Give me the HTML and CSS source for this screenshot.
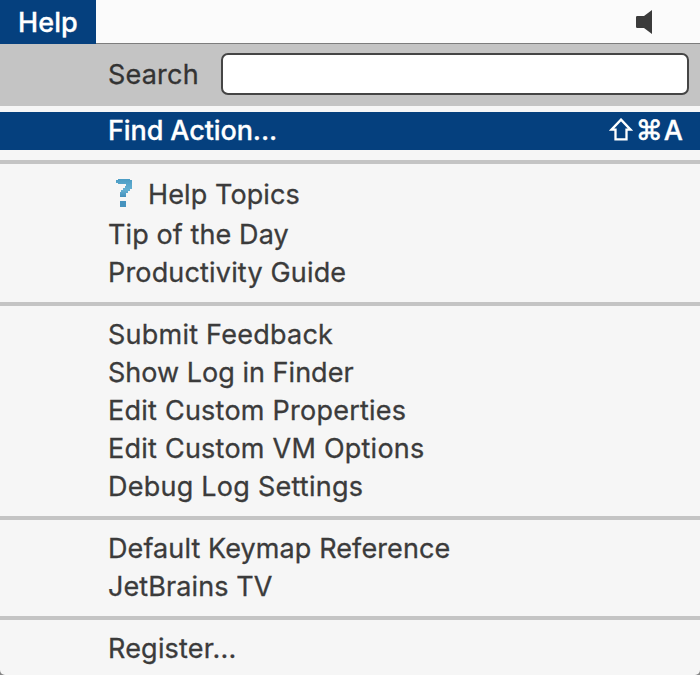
FILE: index.html
```
<!DOCTYPE html>
<html lang="en">
<head>
<meta charset="utf-8">
<title>Help</title>
<link rel="stylesheet" href="styles.css">
</head>
<body>
<header class="menubar">
  <div class="menu-title">Help</div>
  <svg class="speaker" width="17" height="24" viewBox="0 0 17 24"><path d="M0 7.200Q0 6 1.200 6H8L16 0V24L8 18H1.200Q0 18 0 16.800Z" fill="#3b3b3b"/></svg>
</header>
<main class="menu">
  <label class="search"><span class="search-label">Search</span><input class="search-field" type="text"></label>
  <ul class="group first">
    <li class="item selected"><span class="t-find">Find Action...</span><span class="keys"><svg class="shift" width="24" height="24" viewBox="0 0 24 24"><path d="M12 1.600L21.500 11.600H17.500V21.300H6.500V11.600H2.500Z" fill="none" stroke="#fff" stroke-width="2.300" stroke-linejoin="miter"/></svg><span class="cmd">⌘</span><span class="letter">A</span></span></li>
  </ul>
  <ul class="group">
    <li class="item with-icon">
      <svg class="help-icon" width="18" height="30" viewBox="0 0 18 30"><defs><linearGradient id="g" x1="0" y1="0" x2="0" y2="1"><stop offset="0" stop-color="#4b9cc4"/><stop offset=".6" stop-color="#65b0d2"/><stop offset="1" stop-color="#438fbb"/></linearGradient></defs><path fill="url(#g)" d="M1 1H3V0H15V1H17V10H15V12H13V14H11V18H5V13H6V11H8V9H10V7H11V5H3V4H1Z"/><path fill="#4693be" d="M5 22H11V28H5Z"/></svg>
      <span class="t-help">Help Topics</span>
    </li>
    <li class="item"><span class="t-tip">Tip of the Day</span></li>
    <li class="item"><span class="t-prod">Productivity Guide</span></li>
  </ul>
  <ul class="group">
    <li class="item"><span class="t-submit">Submit Feedback</span></li>
    <li class="item"><span class="t-show">Show Log in Finder</span></li>
    <li class="item"><span class="t-props">Edit Custom Properties</span></li>
    <li class="item"><span class="t-vm">Edit Custom VM Options</span></li>
    <li class="item"><span class="t-debug">Debug Log Settings</span></li>
  </ul>
  <ul class="group">
    <li class="item"><span class="t-keymap">Default Keymap Reference</span></li>
    <li class="item"><span class="t-tv">JetBrains TV</span></li>
  </ul>
  <ul class="group">
    <li class="item"><span class="t-reg">Register...</span></li>
  </ul>
</main>
</body>
</html>
```
FILE: styles.css
```
* { box-sizing: border-box; }
body {
  margin: 0;
  height: 675px;
  overflow: hidden;
  background: #858585;
  color: #3b3b3b;
  font: 400 27px/38px Inter, "Liberation Sans", sans-serif;
  letter-spacing: 0.1px;
  -webkit-text-stroke: 0.3px currentColor;
}
.menubar {
  display: flex;
  justify-content: space-between;
  height: 44px;
  background: linear-gradient(#fbfbfb 43px, #7d7d7d 43px);
}
.menu-title {
  width: 96px;
  height: 44px;
  padding: 4px 0 0 18px;
  background: #05407e;
  color: #fff;
  font-weight: 500;
}
.speaker { margin: 10px 47px 0 0; }
.menu {
  height: 631px;
  background: #f6f6f6;
  border-radius: 0 0 5px 5px;
}
.search {
  display: flex;
  align-items: center;
  height: 62px;
  padding: 0 11px 2px 108px;
  background: #c4c4c4;
  color: #333;
  letter-spacing: 0.2px;
}
.search-label {
  width: 113px;
  padding-top: 1px;
}
.search-field {
  flex: 1;
  min-width: 0;
  height: 42px;
  border: 2px solid #454545;
  border-radius: 7px;
  background: #fff;
}
.group {
  margin: 0;
  padding: 10px 0;
  list-style: none;
  border-top: 4px solid #c4c4c4;
}
.group.first { border: 0; padding-top: 6px; }
.item {
  display: flex;
  align-items: center;
  height: 38px;
  padding: 0 17px 0 108px;
  white-space: nowrap;
}
.selected {
  justify-content: space-between;
  background: #05407e;
  color: #fff;
  font-weight: 500;
  letter-spacing: 0;
}
.with-icon { height: 42px; padding: 0 0 2px 115px; }
.help-icon { margin-right: 15px; }
.t-help { padding-top: 2px; }
.keys { display: flex; align-items: center; }
.shift { margin: 0 3px 2px 0; }
.cmd {
  font: 27px/38px "DejaVu Sans", sans-serif;
  -webkit-text-stroke: 0.6px #fff;
}
.letter { margin-left: 1px; }
.t-find { letter-spacing: -0.1px; }
.t-prod { letter-spacing: 0.17px; }
.t-submit, .t-props, .t-vm, .t-debug { letter-spacing: 0.24px; }
.t-show { letter-spacing: 0.02px; }
.t-reg { letter-spacing: 0.2px; }
```
